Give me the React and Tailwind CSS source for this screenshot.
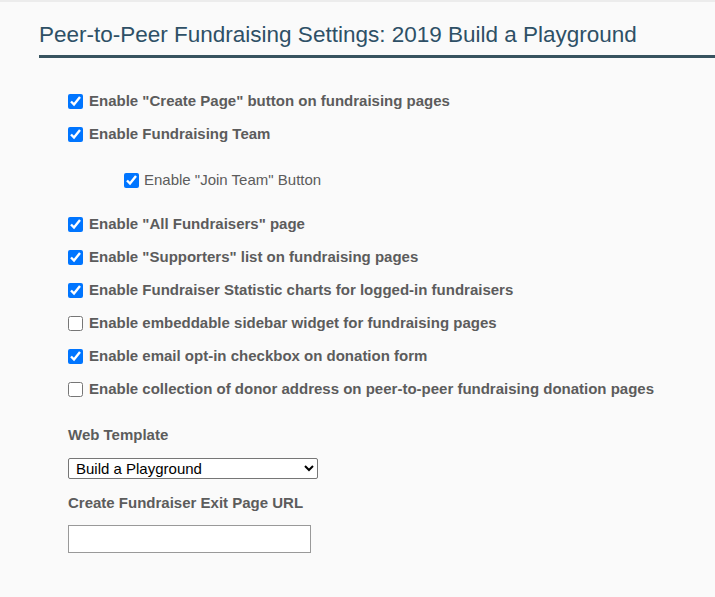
import { useState } from 'react'

const options = [
  { label: 'Enable "Create Page" button on fundraising pages', checked: true },
  { label: 'Enable Fundraising Team', checked: true },
  { label: 'Enable "Join Team" Button', checked: true, sub: true },
  { label: 'Enable "All Fundraisers" page', checked: true },
  { label: 'Enable "Supporters" list on fundraising pages', checked: true },
  { label: 'Enable Fundraiser Statistic charts for logged-in fundraisers', checked: true },
  { label: 'Enable embeddable sidebar widget for fundraising pages', checked: false },
  { label: 'Enable email opt-in checkbox on donation form', checked: true },
  { label: 'Enable collection of donor address on peer-to-peer fundraising donation pages', checked: false },
]

function CheckRow({ item }) {
  const [checked, setChecked] = useState(item.checked)
  if (item.sub) {
    return (
      <label className="flex items-center h-[33px] mt-[13px] mb-[11px] pl-[56px] gap-[5px] text-[15px] text-[#5c5c5c]">
        <input type="checkbox" checked={checked} onChange={() => setChecked(!checked)} className="w-[15px] h-[15px] m-0 accent-[#0075ff]" />
        <span>{item.label}</span>
      </label>
    )
  }
  return (
    <label className="flex items-center h-[33px] gap-[6px] text-[15px] font-bold text-[#5c5c5c]">
      <input type="checkbox" checked={checked} onChange={() => setChecked(!checked)} className="w-[15px] h-[15px] m-0 accent-[#0075ff]" />
      <span>{item.label}</span>
    </label>
  )
}

export default function App() {
  return (
    <div className="min-h-[597px] bg-[#fafafa] font-['Liberation_Sans',Arial,sans-serif] border-t-[2px] border-[#ececec]">
      <div className="pl-[39px] pt-[18px]">
        <h1 className="text-[22.5px] leading-[30px] text-[#2e5066] font-normal">
          Peer-to-Peer Fundraising Settings: 2019 Build a Playground
        </h1>
        <div className="h-[3px] bg-[#37535f] mt-[5px]" />
      </div>

      <div className="pl-[68px] pt-[27px]">
        {options.map((item, index) => (
          <CheckRow key={index} item={item} />
        ))}

        <div className="mt-[19px] text-[15px] leading-[20px] font-bold text-[#5c5c5c]">Web Template</div>
        <select
          defaultValue="Build a Playground"
          className="mt-[13px] w-[250px] h-[21px] text-[15px] text-black bg-white border border-[#767676] rounded-[2px] pl-[3px] block"
        >
          <option>Build a Playground</option>
          <option>Default Template</option>
        </select>

        <div className="mt-[14px] text-[15px] leading-[20px] font-bold text-[#5c5c5c]">Create Fundraiser Exit Page URL</div>
        <input type="text" className="mt-[12px] block w-[243px] h-[28px] bg-white border border-[#999]" />
      </div>
    </div>
  )
}
